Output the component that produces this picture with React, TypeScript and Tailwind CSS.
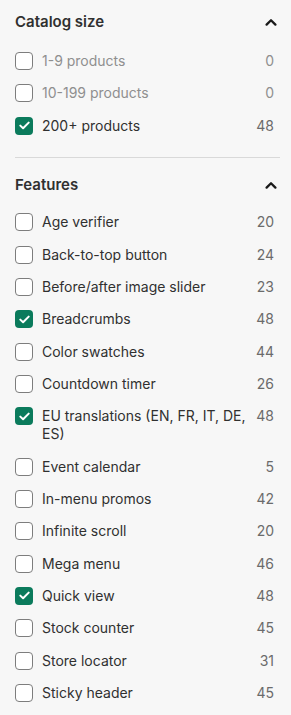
import { useState } from 'react'

interface Option {
  label: string
  count: number
  checked?: boolean
}

const catalogSizes: Option[] = [
  { label: '1-9 products', count: 0 },
  { label: '10-199 products', count: 0 },
  { label: '200+ products', count: 48, checked: true },
]

const features: Option[] = [
  { label: 'Age verifier', count: 20 },
  { label: 'Back-to-top button', count: 24 },
  { label: 'Before/after image slider', count: 23 },
  { label: 'Breadcrumbs', count: 48, checked: true },
  { label: 'Color swatches', count: 44 },
  { label: 'Countdown timer', count: 26 },
  { label: 'EU translations (EN, FR, IT, DE, ES)', count: 48, checked: true },
  { label: 'Event calendar', count: 5 },
  { label: 'In-menu promos', count: 42 },
  { label: 'Infinite scroll', count: 20 },
  { label: 'Mega menu', count: 46 },
  { label: 'Quick view', count: 48, checked: true },
  { label: 'Stock counter', count: 45 },
  { label: 'Store locator', count: 31 },
  { label: 'Sticky header', count: 45 },
]

function ChevronUp() {
  return (
    <svg width="12" height="8" viewBox="0 0 12 8" fill="none">
      <path d="M1.6 6.6L6 2.2l4.4 4.4" stroke="#1a1a1a" strokeWidth="2.3" strokeLinecap="round" strokeLinejoin="round" />
    </svg>
  )
}

function FilterRow({ option }: { option: Option }) {
  const [checked, setChecked] = useState(!!option.checked)
  const disabled = option.count === 0

  return (
    <label className="flex items-start cursor-pointer">
      <button
        type="button"
        onClick={() => setChecked(!checked)}
        className={
          checked
            ? 'w-[18px] h-[18px] shrink-0 rounded-[4px] bg-[#0b7b5c] flex items-center justify-center'
            : 'w-[18px] h-[18px] shrink-0 rounded-[4px] border border-[#7d7d7d] bg-white'
        }
      >
        {checked && (
          <svg width="11" height="9" viewBox="0 0 11 9" fill="none">
            <path d="M1.3 4.6l2.8 2.7L9.7 1.6" stroke="white" strokeWidth="2" strokeLinecap="round" strokeLinejoin="round" />
          </svg>
        )}
      </button>
      <span className={`ml-[9px] flex-1 text-[14px] leading-[18px] ${disabled ? 'text-[#8f8f8f]' : 'text-[#303030]'}`}>
        {option.label}
      </span>
      <span className={`ml-2 shrink-0 text-[14px] leading-[18px] ${disabled ? 'text-[#8f8f8f]' : 'text-[#6b6b6b]'}`}>
        {option.count}
      </span>
    </label>
  )
}

export default function App() {
  return (
    <div className="min-h-screen bg-[#f7f7f7] pl-[15px] pr-[11px] pt-[10px] font-['Inter',sans-serif]">
      {/* Catalog size */}
      <div className="flex items-center justify-between h-6 pr-[3px]">
        <h3 className="text-[15px] font-semibold text-[#303030]">Catalog size</h3>
        <ChevronUp />
      </div>
      <div className="mt-[18px] flex flex-col gap-[14.35px] pr-[6px]">
        {catalogSizes.map((o) => (
          <FilterRow key={o.label} option={o} />
        ))}
      </div>

      <div className="mt-[22.5px] h-px bg-[#d9d9d9]" />

      {/* Features */}
      <div className="mt-[15px] flex items-center justify-between h-6 pr-[3px]">
        <h3 className="text-[15px] font-semibold text-[#303030]">Features</h3>
        <ChevronUp />
      </div>
      <div className="mt-[16px] flex flex-col gap-[14.35px] pr-[6px] pb-6">
        {features.map((o) => (
          <FilterRow key={o.label} option={o} />
        ))}
      </div>
    </div>
  )
}
